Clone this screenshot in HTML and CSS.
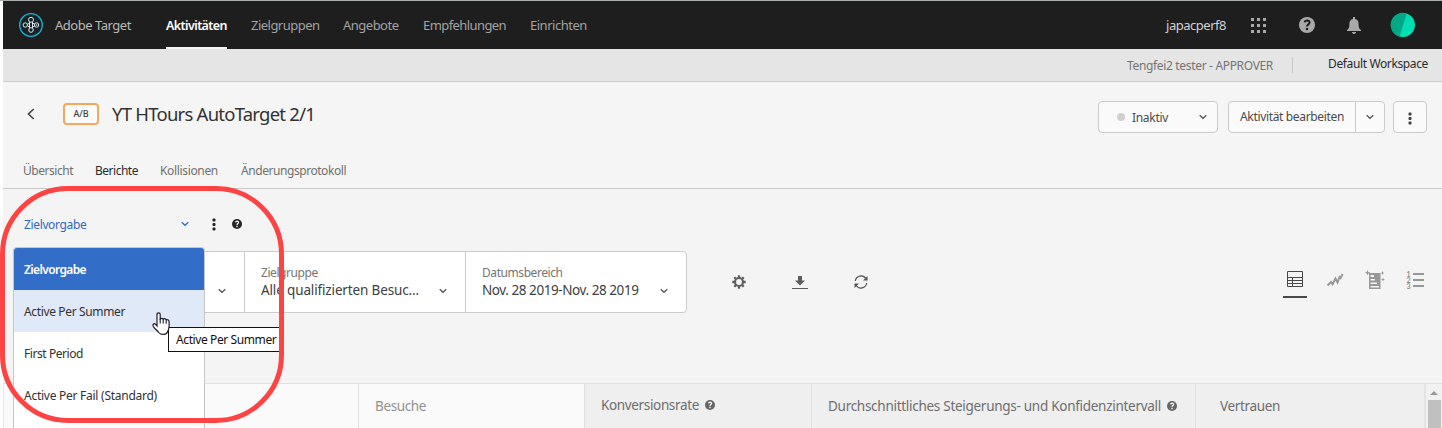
FILE: index.html
```html
<!DOCTYPE html>
<html lang="de">
<head>
<meta charset="utf-8">
<title>Adobe Target</title>
<link rel="stylesheet" href="styles.css">
</head>
<body>
<svg class="defs" aria-hidden="true">
  <symbol id="chev" viewBox="0 0 10 8"><path d="M1.700 2.200 5 5.300 8.300 2.200" fill="none" stroke="currentColor" stroke-width="1.300"/></symbol>
  <symbol id="dots" viewBox="0 0 4 13"><rect x=".5" y=".5" width="3" height="3" rx="1"/><rect x=".5" y="5" width="3" height="3" rx="1"/><rect x=".5" y="9.500" width="3" height="3" rx="1"/></symbol>
  <symbol id="help" viewBox="0 0 16 16"><circle cx="8" cy="8" r="8" fill="currentColor"/><path d="M5.6 5.4Q6 3.5 8.2 3.5T10.6 5.6C10.6 7.5 8 7.3 8 9.6" fill="none" stroke="var(--mark)" stroke-width="2"/><rect x="6.9" y="10.9" width="2.2" height="2.2" fill="var(--mark)"/></symbol>
</svg>
<header class="nav">
  <svg class="logo" viewBox="0 0 24 24"><circle cx="12" cy="12" r="11.3" fill="#152329" stroke="#18b7dc" stroke-width="1.3"/><g fill="none" stroke="#dbe7ea" stroke-width="1"><circle cx="12" cy="6.800" r="2.500"/><circle cx="12" cy="17" r="2.300"/><circle cx="6.300" cy="12" r="2.200"/><circle cx="17.500" cy="12" r="2.200"/><path d="M10.500 9v6M13.500 9v6M8.500 11.200l2-.9M8.500 12.800l2 1.200M13.500 10l2 1M13.500 14l2-1"/></g><circle cx="17.500" cy="12" r=".8" fill="#dbe7ea"/></svg>
  <span class="brand">Adobe Target</span>
  <nav class="links">
    <a class="link on">Aktivitäten</a><a class="link l2">Zielgruppen</a><a class="link l3">Angebote</a><a class="link l4">Empfehlungen</a><a class="link l5">Einrichten</a>
  </nav>
  <span class="org">japacperf8</span>
  <svg class="apps" viewBox="0 0 15 15"><path d="M0 0h3v3H0zM6 0h3v3H6zM12 0h3v3h-3zM0 6h3v3H0zM6 6h3v3H6zM12 6h3v3h-3zM0 12h3v3H0zM6 12h3v3H6zM12 12h3v3h-3z"/></svg>
  <svg class="nav-help"><use href="#help"/></svg>
  <svg class="bell" viewBox="0 0 14 17"><path d="M6 0h2v2c2.500.400 3.600 2.400 3.600 4.800 0 3.600.400 4.800 2.400 6.200v1H0v-1c2-1.400 2.400-2.600 2.400-6.200C2.400 4.400 3.500 2.400 6 2zM4.800 15h4.400Q8.500 17 7 17t-2.200-2z"/></svg>
  <svg class="avatar" viewBox="0 0 24 24"><circle cx="12" cy="12" r="12" fill="#00ddb3"/><path d="M15.700.600A12 12 0 1 0 8.600 23.500z" fill="#00a887"/></svg>
</header>
<div class="workspace">
  <span class="role">Tengfei2 tester - APPROVER</span><i class="sep"></i><span class="space">Default Workspace</span>
</div>
<section class="head">
  <div class="title-row">
    <svg class="back" viewBox="0 0 8 12"><path d="M6.700 1 1.500 6l5.200 5" fill="none" stroke="#4b4b4b" stroke-width="1.700"/></svg>
    <span class="badge">A/B</span>
    <h1>YT HTours AutoTarget 2/1</h1>
    <div class="actions">
      <div class="btn state"><i class="dot"></i><span class="state-label">Inaktiv</span><svg class="chev"><use href="#chev"/></svg></div>
      <div class="btn split"><span class="edit">Aktivität bearbeiten</span><span class="more-edit"><svg class="chev"><use href="#chev"/></svg></span></div>
      <div class="btn more"><svg class="dots"><use href="#dots"/></svg></div>
    </div>
  </div>
  <div class="tabs"><span class="tab t1">Übersicht</span><span class="tab t2 on">Berichte</span><span class="tab t3">Kollisionen</span><span class="tab t4">Änderungsprotokoll</span></div>
</section>
<main class="report">
  <div class="goal">
    <div class="select"><span class="select-label">Zielvorgabe</span><svg class="chev"><use href="#chev"/></svg>
      <ul class="menu"><li class="sel">Zielvorgabe</li><li class="hover">Active Per Summer</li><li class="first">First Period</li><li class="fail">Active Per Fail (Standard)</li><li></li></ul>
    </div>
    <svg class="dots"><use href="#dots"/></svg>
    <svg class="goal-help"><use href="#help"/></svg>
  </div>
  <div class="toolbar">
    <div class="filters">
      <div class="filter f1"><svg class="chev"><use href="#chev"/></svg></div>
      <div class="filter f2"><div><div class="label">Zielgruppe</div><div class="value">Alle qualifizierten Besuc...</div></div><svg class="chev"><use href="#chev"/></svg></div>
      <div class="filter f3"><div><div class="label">Datumsbereich</div><div class="value date">Nov. 28 2019-Nov. 28 2019</div></div><svg class="chev"><use href="#chev"/></svg></div>
    </div>
    <div class="tools">
      <svg width="14" height="14" viewBox="-7 -7 14 14"><circle r="4" fill="none" stroke="#606060" stroke-width="2.200"/><path d="M0-6.700V-4M0 6.700V4M-6.700 0H-4M6.700 0H4M-4.700-4.700-3-3M4.700 4.700 3 3M-4.700 4.700-3 3M4.700-4.700 3-3" stroke="#606060" stroke-width="2.300"/></svg>
      <svg width="16" height="14" viewBox="0 0 16 14"><path d="M6 1h4v4.500h3L8 10.500 3 5.500h3zM0 13h16v1H0z" fill="#5c5c5c"/></svg>
      <svg width="14" height="14" viewBox="0 0 14 14"><path d="M1.300 6A5.800 5.800 0 0 1 12 3.800M12.700 8A5.800 5.800 0 0 1 2 10.200" fill="none" stroke="#555" stroke-width="1.200"/><path d="M13.500 1v4.500H9zM.5 13V8.500H5z" fill="#555"/></svg>
    </div>
    <div class="views">
      <span class="view on"><svg width="16" height="16" viewBox="0 0 16 16"><path d="M.5.500h15v15H.500zM.500 6.500h15M.500 9.500h15M.500 12.500h15M5.500 6.500v9" fill="none" stroke="#484848"/></svg></span>
      <span class="view"><svg width="16" height="14" viewBox="0 0 16 14"><path d="M.5 12.500 4 9l1.500 2.200L8.500 5.500l2 4L12.500 4l1 1L15.700 1" fill="none" stroke="#999" stroke-width="2"/></svg></span>
      <span class="view"><svg width="20" height="20" viewBox="0 0 20 20"><path d="M4 3h11.500v16H4z" fill="#989898"/><path d="M5.500 5H9v2H5.500zM5.500 9H10v1.500H5.500zM5.500 12.500H12V14H5.500zM5.500 16H14v1.500H5.500z" fill="#f4f4f4"/><path d="m2.500 0 .8 1.900 2.200.8-2.200.8-.8 2-.8-2L-.3 2.700l2-.8zM17.500 1l.6 1.400 1.400.6-1.400.6-.6 1.400-.6-1.400L15.500 3l1.400-.6zM18 7.500l.6 1.400 1.400.6-1.400.6-.6 1.400-.6-1.400-1.400-.6 1.400-.6z" fill="#989898"/></svg></span>
      <span class="view"><span class="nums"><b>1</b><b>2</b><b>3</b></span><svg width="11" height="16" viewBox="0 0 11 16"><path d="M0 1h11v2H0zM0 7h11v2H0zM0 13h11v2H0z" fill="#989898"/></svg></span>
    </div>
  </div>
  <div class="table">
    <div class="col c0"></div>
    <div class="col c1"><span>Besuche</span></div>
    <div class="col c2"><span>Konversionsrate</span><svg class="col-help"><use href="#help"/></svg></div>
    <div class="col c3"><span>Durchschnittliches Steigerungs- und Konfidenzintervall</span><svg class="col-help"><use href="#help"/></svg></div>
    <div class="col c4"><span>Vertrauen</span></div>
    <div class="scroll"><i class="up"></i><i class="thumb"></i></div>
  </div>
</main>
<div class="tooltip">Active Per Summer</div>
<svg class="cursor" viewBox="0 0 19 24"><path d="M5 14V2.500Q5 .8 6.600.8T8.200 2.500V7q1.500-1.200 3 0 1.600-.8 3 .7 2.800-.4 2.900 2V14c0 3-.6 4.300-1.700 6-1 3-6.500 3.300-8.700.5C5 18 3.500 17.500 1.200 14.300.3 12.300 2 11 3.400 12.200z" fill="#fff" stroke="#1c1c28" stroke-width="1.200"/><path d="M8.200 7v4.500M11.200 7V11.500M14.200 7.700v4" stroke="#1c1c28" stroke-width="1.100"/></svg>
<div class="callout"></div>
</body>
</html>
```
FILE: styles.css
```css
*{box-sizing:border-box}
html,body{height:428px;overflow:hidden}
body{margin:0;padding-left:3px;background:#fff;border-top:1px solid #a9adab;font:12px/16px "Noto Sans","Open Sans",sans-serif;letter-spacing:-.36px;color:#323232;position:relative}
span,li,h1,a,.label,.value,.tooltip{white-space:nowrap}
svg{flex:none;display:block;overflow:visible}
.defs{position:absolute;width:0;height:0}
.chev{width:10px;height:8px;color:#555}
.dots{width:4px;height:13px;fill:#404040}

.nav{height:48px;background:#1e1e1e;display:flex;align-items:center;padding:0 27px 0 16px;font-size:13px;letter-spacing:-.48px;color:#b9b9b9}
.logo{width:24px;height:24px}
.brand{margin-left:12px;width:76px}
.links{display:flex;align-self:stretch;margin-left:35px}
.link{display:flex;align-items:center;height:48px;color:#a2a2a2}
.link.on{color:#fff;font-size:12.5px;font-weight:600;letter-spacing:-.6px;border-bottom:2px solid #f5f5f5;padding-top:4px;width:61px;margin-right:24px}
.l2{width:92px;letter-spacing:-.52px}
.l3{width:80px;letter-spacing:-.51px}
.l4{width:107px;letter-spacing:-.58px}
.org{margin-left:auto;color:#d0d0d0}
.apps{width:15px;height:15px;fill:#a9a9a9;margin-left:25px}
.nav-help{width:16px;height:16px;color:#a9a9a9;--mark:#1e1e1e;margin-left:33px}
.bell{width:14px;height:17px;fill:#a9a9a9;margin-left:32px}
.avatar{width:24px;height:24px;margin-left:30px}

.workspace{height:33px;background:#e5e5e5;border-bottom:1px solid #cdcdcd;display:flex;align-items:center;justify-content:flex-end;padding-right:14px}
.role{letter-spacing:-.33px;color:#747474;padding-top:1px}
.sep{width:1px;height:16px;background:#c8c8c8;margin:0 35px 0 19px}
.space{letter-spacing:-.37px;color:#2c2c2c;padding-bottom:3px}

.head{height:107px;background:#f5f5f5;border-bottom:1px solid #cacaca}
.title-row{display:flex;align-items:center;height:64px;padding:0 15px 0 24px}
.back{width:8px;height:12px}
.badge{width:36px;height:22px;border:2px solid #f9a65a;border-radius:4px;margin-left:28px;font-size:9px;line-height:17px;font-weight:500;letter-spacing:-.1px;text-align:center;background:#fbfbfb;color:#3c3c3c}
h1{margin:0 0 0 13px;font-size:18.5px;line-height:24px;font-weight:400;letter-spacing:-.76px}
.actions{display:flex;margin-left:auto;padding-top:6px}
.btn{height:32px;border:1px solid #cbcbcb;border-radius:4px;background:#fafafa;display:flex;align-items:center;color:#4b4b4b}
.state{width:120px;padding:0 9px 0 18px;justify-content:space-between}
.dot{width:8px;height:8px;border-radius:50%;background:#d0d0d0}
.state-label{margin:0 auto 0 7px;letter-spacing:-.31px;padding-top:1px}
.split{width:157px;margin-left:10px}
.edit{width:126px;padding:0 0 1px 11px;letter-spacing:-.34px}
.more-edit{flex:1;height:30px;border-left:1px solid #cbcbcb;display:flex;align-items:center;justify-content:center}
.more{width:34px;margin-left:8px;justify-content:center;padding-top:2px}
.tabs{display:flex;margin-top:17px;padding-left:20px;color:#707070}
.t1{width:72px;letter-spacing:-.47px}
.t2{width:65px;letter-spacing:-.49px}
.t3{width:81px;letter-spacing:-.34px}
.t4{letter-spacing:-.44px}
.tab.on{color:#2c2c2c}

.report{background:#f4f4f4;height:239px;padding-top:19px}
.goal{display:flex;align-items:center;height:32px}
.select{width:188px;height:32px;display:flex;align-items:center;justify-content:space-between;padding:0 1px 0 21px;color:#2f67c8;position:relative}
.select-label{padding-top:2px}
.select .chev{color:#2f6fc6}
.goal .dots{margin-left:21px;fill:#222}
.goal-help{width:10px;height:10px;color:#252525;--mark:#fff;margin-left:16px}
.menu{position:absolute;z-index:2;left:10px;top:39px;width:192px;height:190px;margin:0;padding:0;list-style:none;background:#fff;border:1px solid #c6c6c6;border-bottom:0;border-radius:4px 4px 0 0;overflow:hidden;color:#323232}
.menu li{height:42px;line-height:43px;padding-left:10px}
.menu .sel{background:#326ec8;color:#fff;font-weight:600;letter-spacing:-.62px}
.menu .hover{background:#e0e9f7}
.menu .first{letter-spacing:-.43px}
.menu .fail{letter-spacing:-.26px}
.toolbar{display:flex;height:62px;margin-top:11px;padding:0 15px 0 10px}
.filters{display:flex;border:1px solid #cbcbcb;border-radius:4px;background:#fff;height:62px;width:674px}
.filter{display:flex;justify-content:space-between;align-items:center}
.filter .chev{margin-top:17px}
.f1{width:230px;justify-content:flex-end;padding-right:17px}
.f2{width:221px;border-left:1px solid #cbcbcb;padding:0 17px 0 16px}
.f3{width:221px;border-left:1px solid #cbcbcb;padding:0 17px 0 16px}
.label{color:#747474;line-height:16px;letter-spacing:-.43px;padding-top:1px}
.value{font-size:13.5px;line-height:19px;letter-spacing:-.14px;color:#404040}
.date{letter-spacing:-.43px}
.tools{display:flex;align-items:center;gap:46px;margin-left:45px}
.views{display:flex;margin:16px 0 0 auto;gap:16px}
.view{width:24px;height:31px;display:flex;justify-content:center;align-items:center;padding-bottom:6px}
.view.on{border-bottom:2px solid #484848;padding-bottom:6px}
.nums{display:flex;flex-direction:column;width:5px;margin-right:1px;color:#929292;font:7px/6px Lato,sans-serif}
.table{height:45px;margin-top:70px;display:flex;border-top:1px solid #e1e1e1;background:#efefef;font-size:13.5px;color:#6e6e6e}
.col{display:flex;align-items:center;border-left:1px solid #e1e1e1}
.c0{width:355px;background:#fafafa;border-left-color:#e8e8e8}
.c1{width:226px;background:#fafafa;padding-left:16px;color:#929292;letter-spacing:-.37px}
.c2{width:227px;padding:0 0 3px 16px;letter-spacing:-.35px}
.c3{width:384px;padding-left:16px;letter-spacing:-.28px}
.c4{width:229px;padding-left:24px;letter-spacing:-.34px}
.col-help{width:10px;height:10px;margin-left:6px;color:#666;--mark:#fff}
.scroll{flex:1;background:#f1f1f1;border-left:2px solid #e3e3e3;padding:7px 0 0 2px}
.up{display:block;width:0;border:4px solid transparent;border-top:0;border-bottom-color:#999;margin-left:2px}
.thumb{display:block;width:13px;height:33px;margin-top:5px;background:#c0c0c0}

.tooltip{position:absolute;z-index:3;left:168px;top:326px;width:116px;height:25px;border:1px solid #111;background:#fff;padding-left:7px;line-height:24px;letter-spacing:-.4px;color:#111}
.cursor{position:absolute;z-index:4;left:152px;top:311px;width:19px;height:24px}
.callout{position:absolute;z-index:5;left:0;top:185px;width:284px;height:237px;border:5px solid #fd4444;border-radius:68px}
```
